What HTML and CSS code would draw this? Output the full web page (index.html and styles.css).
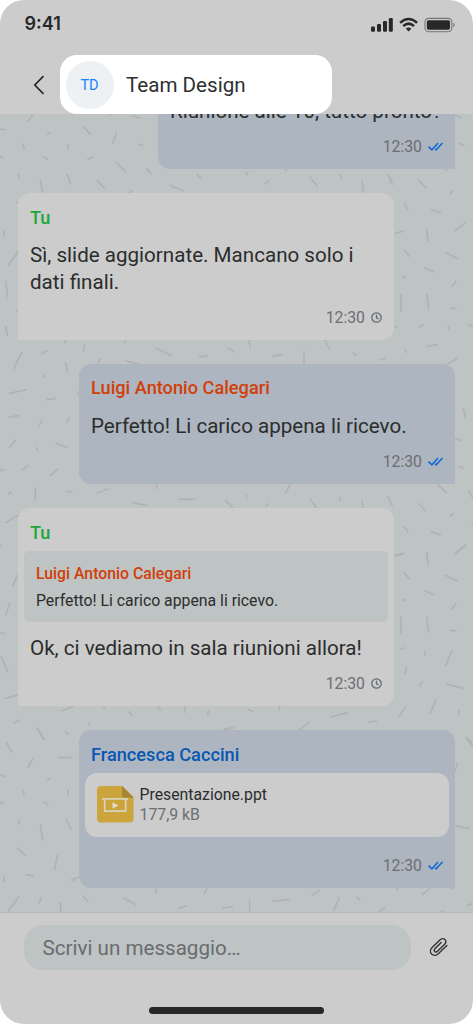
FILE: index.html
```html
<!DOCTYPE html>
<html lang="it">
<head>
<meta charset="utf-8">
<title>Team Design</title>
<link rel="stylesheet" href="styles.css">
</head>
<body>
<div class="phone">
  <header class="header">
    <div class="status">
      <span class="clock">9:41</span>
      <svg class="status-icons" width="86" height="18" viewBox="0 0 86 18">
        <g fill="#282828">
          <rect x="1" y="10.5" width="4" height="5.2" rx="1.2"/><rect x="7" y="8" width="4" height="7.7" rx="1.2"/><rect x="13" y="5" width="4" height="10.7" rx="1.2"/><rect x="18.8" y="2" width="4" height="13.7" rx="1.2"/>
          <path d="M35.8 12.5Q38.6 10.5 41.4 12.5L38.6 15.5Z"/>
          <rect x="56.8" y="4.3" width="23.2" height="9.5" rx="1.7"/>
        </g>
        <g fill="none" stroke="#282828" stroke-width="2.5"><path d="M30.1 6.8Q38.6-.9 47.1 6.8M33.2 10.1Q38.6 5.2 44 10.1"/></g>
        <rect x="55" y="2.4" width="26.8" height="13.3" rx="3.7" fill="none" stroke="#777" stroke-width="1.1"/>
        <path d="M83.2 6.7Q84.8 7.3 84.8 9T83.2 11.3Z" fill="#808080"/>
      </svg>
    </div>
    <div class="nav">
      <svg class="back" width="12" height="20" viewBox="0 0 12 20"><path d="M10.5 1.2 1.8 10l8.7 8.8" fill="none" stroke="#282828" stroke-width="1.7"/></svg>
      <div class="title-pill"><span class="avatar">TD</span><span class="title">Team Design</span></div>
    </div>
  </header>

  <main class="chat">
    <svg class="confetti" width="473" height="799" viewBox="0 114 473 799">
      <g fill="none" stroke="#b0b2b4" stroke-width="5">
        <path transform="scale(.33333)" d="M82 365l18-22M0 387l16 3M141 404l10-8M250 379l22 25M337 431l13-34M398 347l22 8M412 432l18 5M67 430l6 18M204 431v17M130 469l15 10M0 468l10 7M261 479l18-8M347 485l29 29M439 503l15 21M589 523l17 12M55 522l4 14M200 522l9 18M325 345l8-3"/>
        <path transform="translate(236) scale(.33333)" d="M656 345l22 9M668 430l18 8M622 505l12 8M30 527l5-12M146 514l8-7M222 530l9 15M312 522l4 15M456 522l10 22"/>
        <path transform="translate(0 180) scale(.33333)" d="M121 0l6 38M206 0l7 14M290 0l24 25M507 15l43 18M386 39l11-8M49 67l6 1M14 148l-4 22M24 258l30-44M17 302l6 50M47 393l8-2M17 438l6 31M195 480v10M372 490l5-9M254 492l-4 22M125 521l17-10M40 568l26-53M196 547l8 29M292 549l13-15M376 543l43 9M466 503l49 24M596 531l29-4M683 503l22 14M128 580l8 13"/>
        <path transform="translate(236 180) scale(.33333)" d="M86 13l14-13M230 0l15 21M378 0l5 38M461 0l10 14M548 0l22 25M642 41l10-10M503 69l14 20M585 88l30 10M657 154l34-29M476 160l29-7M572 149l4 36M504 209l17 21M627 217l38 19M565 263l29 14M498 290l14 4M647 321l14-19M495 342v54M572 342l6 47M642 385h20M475 443l9-6M549 441l15-8M635 437l8 16M697 433l14 8M39 480l3 22M267 481l15 28M204 512v39M108 529l31-5M350 517l10 10M432 540l19-6M505 506l8 12M572 499l33-5M634 552l30-17"/>
        <path transform="translate(0 360) scale(.33333)" d="M26 101l53-12M139 119l28-4M25 172l34-6M115 201l11-22M201 188l8-18M232 104l5-10M28 262l20-23M106 262l9 12M166 249l37 14M0 333l12-5M66 331l20-17M149 348l26-22M25 404l9-10M106 381v43M201 395h17M290 400l34-14M467 373l6 14M398 428l45 9M537 418h51M676 421l22 22M16 488l39-22"/>
        <path transform="translate(236 360) scale(.33333)" d="M682 144l7 32M656 235l20 6M668 320l17 4M32 404l-1 14M146 402l18-29M87 441l12-11M222 418l20 25M311 410l4 13M378 421l3 22M456 409l13 31M605 373l28 27M547 429l23 25M697 391l14 23M642 470l10-10M503 497l14 20M585 515l30 10M657 583l34-29M476 587l29-8M572 577l3 23M709 485v8"/>
        <path transform="translate(0 540) scale(.33333)" d="M0 16h5M37 139l17-35M16 226l14-37M0 280h15M3 348l22 51M13 477l41-13M183 513l38-14M309 499l8 8M386 514l10 13M471 499l12 12M554 499v20M622 526l5-15M40 550l20-10M111 563l23 37M195 573l11 10M265 546l6 12M670 568l33-5"/>
        <path transform="translate(236 540) scale(.33333)" d="M656 42l35-28M476 48l29-7M572 37l4 37M504 97l17 21M627 105l38 19M565 151l29 14M498 178l14 4M647 208l14-18M495 230v54M572 230l6 47M642 272h20M493 328l14-5M567 333v14M628 379l21-50M506 402l6-20M549 438l12-15M631 432l52 14M582 522l18-44M488 532l20-30M668 510l2 14M34 507l17 8M128 510l4-11M282 531l54-13M189 571l32-26M395 547l28-4M691 592l19 17"/>
        <path transform="translate(0 720) scale(.33333)" d="M18 66l19 32M112 24l20 37M175 113h42M83 143l17-29M0 165l16 4M142 182l9-8M67 208l6 18M204 208v17M131 245l14 11M0 245l10 9M55 300l4 14M121 311l7 51M199 298l15 33M51 382l26 26M172 405l-8 46M78 464l23 4M13 467l-2 19M213 480l24-9"/>
        <path transform="translate(236 720) scale(.33333)" d="M692 55l19 24M656 156l9-26M656 317l44 9"/>
        <path transform="translate(0 880) scale(.33333)" d="M24 94l34-45M116 70l9-19M182 66v32M249 47l16 20M371 55l38 19M466 25l5 18M612 43l9-19M535 86l26-10M667 84l32-4M9 0l3 7M213 1l12-3"/>
        <path transform="translate(236 880) scale(.33333)" d="M41 60v37M109 64l56-6M226 47l25-16M311 51l-18 41M362 51l12 10M427 98l20-17M480 32l7-8M557 45l25-20M692 76l19-5M612 98l12-6M645 25l9 1"/>
      </g>
    </svg>

    <article class="bubble mine cut">
      <p class="text">Riunione alle 10, tutto pronto?</p>
      <div class="meta"><span>12:30</span><svg class="ticks" width="15" height="9" viewBox="0 0 15 9"><path d="M.5 4.6 3.9 7.8 10 .9M7.1 6.8 8.1 7.8 14.5.9" fill="none" stroke="#0d69d3" stroke-width="1.5"/></svg></div>
    </article>

    <article class="bubble other">
      <h2 class="name green">Tu</h2>
      <p class="text">Sì, slide aggiornate. Mancano solo i<br>dati finali.</p>
      <div class="meta"><span>12:30</span><svg class="wait" width="11" height="11" viewBox="0 0 11 11"><path d="M5.5 2.8v3l2 1M10.2 5.5a4.7 4.7 0 1 1-9.4 0 4.7 4.7 0 0 1 9.4 0Z" fill="none" stroke="#626c73" stroke-width="1.3"/></svg></div>
    </article>

    <article class="bubble mine">
      <h2 class="name orange">Luigi Antonio Calegari</h2>
      <p class="text">Perfetto! Li carico appena li ricevo.</p>
      <div class="meta"><span>12:30</span><svg class="ticks" width="15" height="9" viewBox="0 0 15 9"><path d="M.5 4.6 3.9 7.8 10 .9M7.1 6.8 8.1 7.8 14.5.9" fill="none" stroke="#0d69d3" stroke-width="1.5"/></svg></div>
    </article>

    <article class="bubble other">
      <h2 class="name green">Tu</h2>
      <blockquote class="quote">
        <h3 class="quote-name orange">Luigi Antonio Calegari</h3>
        <p class="quote-text">Perfetto! Li carico appena li ricevo.</p>
      </blockquote>
      <p class="text">Ok, ci vediamo in sala riunioni allora!</p>
      <div class="meta"><span>12:30</span><svg class="wait" width="11" height="11" viewBox="0 0 11 11"><path d="M5.5 2.8v3l2 1M10.2 5.5a4.7 4.7 0 1 1-9.4 0 4.7 4.7 0 0 1 9.4 0Z" fill="none" stroke="#626c73" stroke-width="1.3"/></svg></div>
    </article>

    <article class="bubble mine">
      <h2 class="name blue">Francesca Caccini</h2>
      <div class="file">
        <svg width="37" height="37" viewBox="0 0 37 37">
          <path d="M4 0H25.5L36.5 11V32.5a4 4 0 0 1-4 4H4a4 4 0 0 1-4-4V4a4 4 0 0 1 4-4Z" fill="#cba53c"/>
          <path d="M25 0 36.5 11.7H28a3 3 0 0 1-3-3Z" fill="#a68633"/>
          <path d="M5 12.8H31.3M7.7 13v12.2h21V13" fill="none" stroke="#d9d2bd" stroke-width="1.7"/>
          <path d="M15.5 16.2 21.3 19.5l-5.8 3.3Z" fill="#dfdacb"/>
        </svg>
        <div class="file-info"><p class="file-name">Presentazione.ppt</p><p class="file-size">177,9 kB</p></div>
      </div>
      <div class="meta"><span>12:30</span><svg class="ticks" width="15" height="9" viewBox="0 0 15 9"><path d="M.5 4.6 3.9 7.8 10 .9M7.1 6.8 8.1 7.8 14.5.9" fill="none" stroke="#0d69d3" stroke-width="1.5"/></svg></div>
    </article>
  </main>

  <footer class="composer">
    <div class="composer-row">
      <div class="field">Scrivi un messaggio…</div>
      <svg width="20" height="20" viewBox="0 0 20 20"><path d="M17.9 8.6 9.3 16.8C7.1 18.9 4.3 18.8 2.6 17.1.9 15.3 1.1 12.5 3.1 10.5L10.9 2.9C12.5 1.3 14.6 1.2 15.9 2.5c1.3 1.3 1.2 3.3-.4 4.9L8.4 14.3c-.9.9-2.1.9-2.8.2-.7-.8-.6-1.9.3-2.8L12.2 5.6" fill="none" stroke="#333" stroke-width="1.4" stroke-linecap="round"/></svg>
    </div>
    <div class="home-bar"></div>
  </footer>
</div>
</body>
</html>
```

FILE: styles.css
```css
* { box-sizing: border-box; margin: 0; padding: 0; }
body { background: #fff; font-family: Roboto, sans-serif; color: #2b2d2d; }
svg { display: block; flex: none; }
.phone { width: 473px; height: 1024px; display: flex; flex-direction: column; border-radius: 24px; overflow: hidden; background: #ccc; }

.header { height: 114px; flex: none; display: flex; flex-direction: column; }
.status { height: 54.5px; padding: 0 17px 7px 24.5px; display: flex; justify-content: space-between; align-items: center; }
.clock { font: 600 18px/20px Inter, sans-serif; color: #282828; }
.status-icons { margin-top: 3px; }
.nav { height: 59.5px; display: flex; align-items: center; padding-left: 32.5px; gap: 15px; }
.back { margin-top: 2px; }
.title-pill { width: 272.5px; height: 59.5px; background: #fff; border-radius: 17px; display: flex; align-items: center; padding: 1px 6px 0; gap: 12.5px; }
.avatar { width: 48px; height: 48px; border-radius: 50%; background: #edf1f4; color: #1683ff; font-size: 14.5px; padding-top: 1px; display: flex; align-items: center; justify-content: center; }
.title { font-size: 20.6px; color: #2e3031; }

.chat { position: relative; height: 799px; flex: none; overflow: hidden; background: #bec3c4; border-bottom: 1px solid #b3b9ba; padding: 0 18px 24px; display: flex; flex-direction: column; justify-content: flex-end; gap: 24.3px; }
.confetti { position: absolute; left: 0; top: 0; }
.bubble { position: relative; width: 376px; flex: none; padding: 12px 12px 12.5px; }
.mine { align-self: flex-end; background: #adb5c0; border-radius: 12px 12px 0 12px; }
.other { background: #ccc; border-radius: 12px 12px 12px 0; }
.cut { width: 297px; }
.name { font-size: 18.2px; line-height: 24px; padding-top: .5px; height: 24px; font-weight: 500; white-space: nowrap; }
.text { margin-top: 13px; font-size: 20.6px; line-height: 26.5px; white-space: nowrap; }
.meta { margin-top: 12px; height: 20px; padding-top: 1px; display: flex; align-items: center; justify-content: flex-end; gap: 6px; font-size: 15.8px; line-height: 20px; color: #6c6f72; }
.ticks, .wait { margin-top: -1px; }
.green { color: #20a73a; }
.orange { color: #d23f09; }
.blue { color: #0857b3; }
.quote { margin: 6.5px -6px 0; height: 71px; padding: 13px 12px 0; border-radius: 5px; background: #bec3c4; }
.quote-name { font-size: 15.8px; line-height: 20px; font-weight: 500; }
.quote-text { font-size: 15.8px; line-height: 20px; margin-top: 7px; }
.file { margin: 6.5px -6px 19px; height: 64px; padding: 0 12px; border-radius: 12px; background: #ccc; display: flex; align-items: center; gap: 5.5px; }
.file + .meta { margin-top: 0; }
.file-info { padding-top: 1px; }
.file-name, .file-size { font-size: 15.8px; line-height: 20.5px; }
.file-size { color: #6c6f72; }

.composer { flex: 1; display: flex; flex-direction: column; align-items: center; }
.composer-row { width: 100%; padding: 12px 20px 0 24px; display: flex; align-items: center; gap: 18px; }
.field { width: 387px; flex: none; height: 44.5px; border-radius: 19px; background: #bec3c4; color: #696c6e; font-size: 20.6px; line-height: 46px; padding-left: 18.5px; }
.home-bar { width: 175px; height: 6.5px; border-radius: 4px; background: #282828; margin-top: 37.7px; }
```
